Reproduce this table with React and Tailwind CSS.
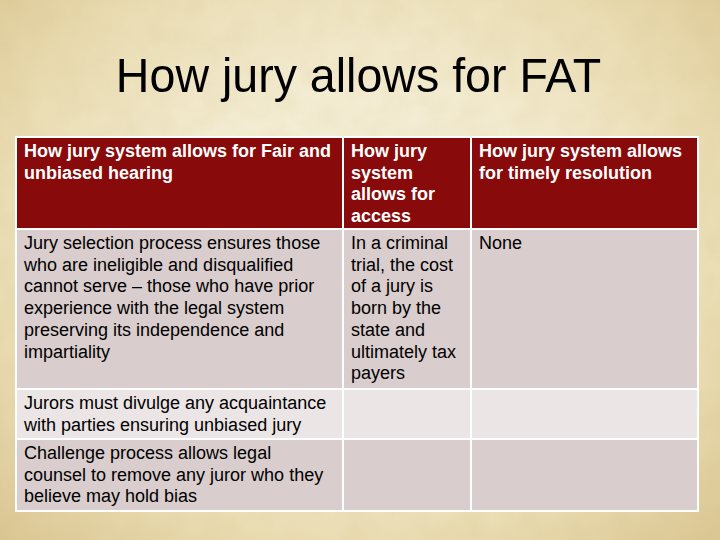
import React from "react";

const font = { fontFamily: '"Liberation Sans", Arial, sans-serif' };

function Lines({ lines }) {
  return (
    <>
      {lines.map((l, i) => (
        <div key={i} className="whitespace-nowrap">
          {l}
        </div>
      ))}
    </>
  );
}

export default function App() {
  const header = [
    ["How jury system allows for Fair and", "unbiased hearing"],
    ["How jury", "system", "allows for", "access"],
    ["How jury system allows", "for timely resolution"],
  ];
  const rows = [
    {
      h: "h-[158px]",
      bg: "bg-[#d9cdcd]",
      cells: [
        [
          "Jury selection process ensures those",
          "who are ineligible and disqualified",
          "cannot serve – those who have prior",
          "experience with the legal system",
          "preserving its independence and",
          "impartiality",
        ],
        [
          "In a criminal",
          "trial, the cost",
          "of a jury is",
          "born by the",
          "state and",
          "ultimately tax",
          "payers",
        ],
        ["None"],
      ],
    },
    {
      h: "h-[48px]",
      bg: "bg-[#ebe5e5]",
      cells: [
        ["Jurors must divulge any acquaintance", "with parties ensuring unbiased jury"],
        [],
        [],
      ],
    },
    {
      h: "h-[70px]",
      bg: "bg-[#d9cdcd]",
      cells: [
        [
          "Challenge process allows legal",
          "counsel to remove any juror who they",
          "believe may hold bias",
        ],
        [],
        [],
      ],
    },
  ];

  return (
    <div
      className="relative w-[720px] h-[540px] overflow-hidden bg-[radial-gradient(ellipse_at_50%_45%,#f6f0dc_0%,#f3ebd0_40%,#eadcb2_72%,#dac692_100%)]"
      style={font}
    >
      <svg className="absolute inset-0 w-full h-full opacity-[0.16] pointer-events-none" width="720" height="540">
        <filter id="grain">
          <feTurbulence type="fractalNoise" baseFrequency="0.035" numOctaves="4" seed="7" />
          <feColorMatrix type="matrix" values="0 0 0 0 0.6  0 0 0 0 0.47  0 0 0 0 0.2  0 0 0 1.2 -0.35" />
        </filter>
        <rect width="720" height="540" filter="url(#grain)" />
      </svg>

      <div className="relative flex flex-col">
        <div className="mt-[51px] flex justify-center">
          <h1 className="pr-[4px] text-[49px] leading-[49px] text-black font-normal whitespace-nowrap scale-x-[0.95]">
            How jury allows for FAT
          </h1>
        </div>

        <div className="ml-[15px] mt-[36px] w-[684px] bg-white p-[2px] grid grid-cols-[325px_126px_225px] gap-[2px] text-[18px] leading-[21.7px]">
          {header.map((c, i) => (
            <div
              key={i}
              className="h-[90px] bg-[#880a0a] text-white font-bold pl-[7px] pt-[3px]"
            >
              <Lines lines={c} />
            </div>
          ))}
          {rows.map((r, ri) =>
            r.cells.map((c, ci) => (
              <div
                key={ri + "-" + ci}
                className={`${r.h} ${r.bg} text-black pl-[7px] pt-[3px]`}
              >
                <Lines lines={c} />
              </div>
            ))
          )}
        </div>
      </div>
    </div>
  );
}
